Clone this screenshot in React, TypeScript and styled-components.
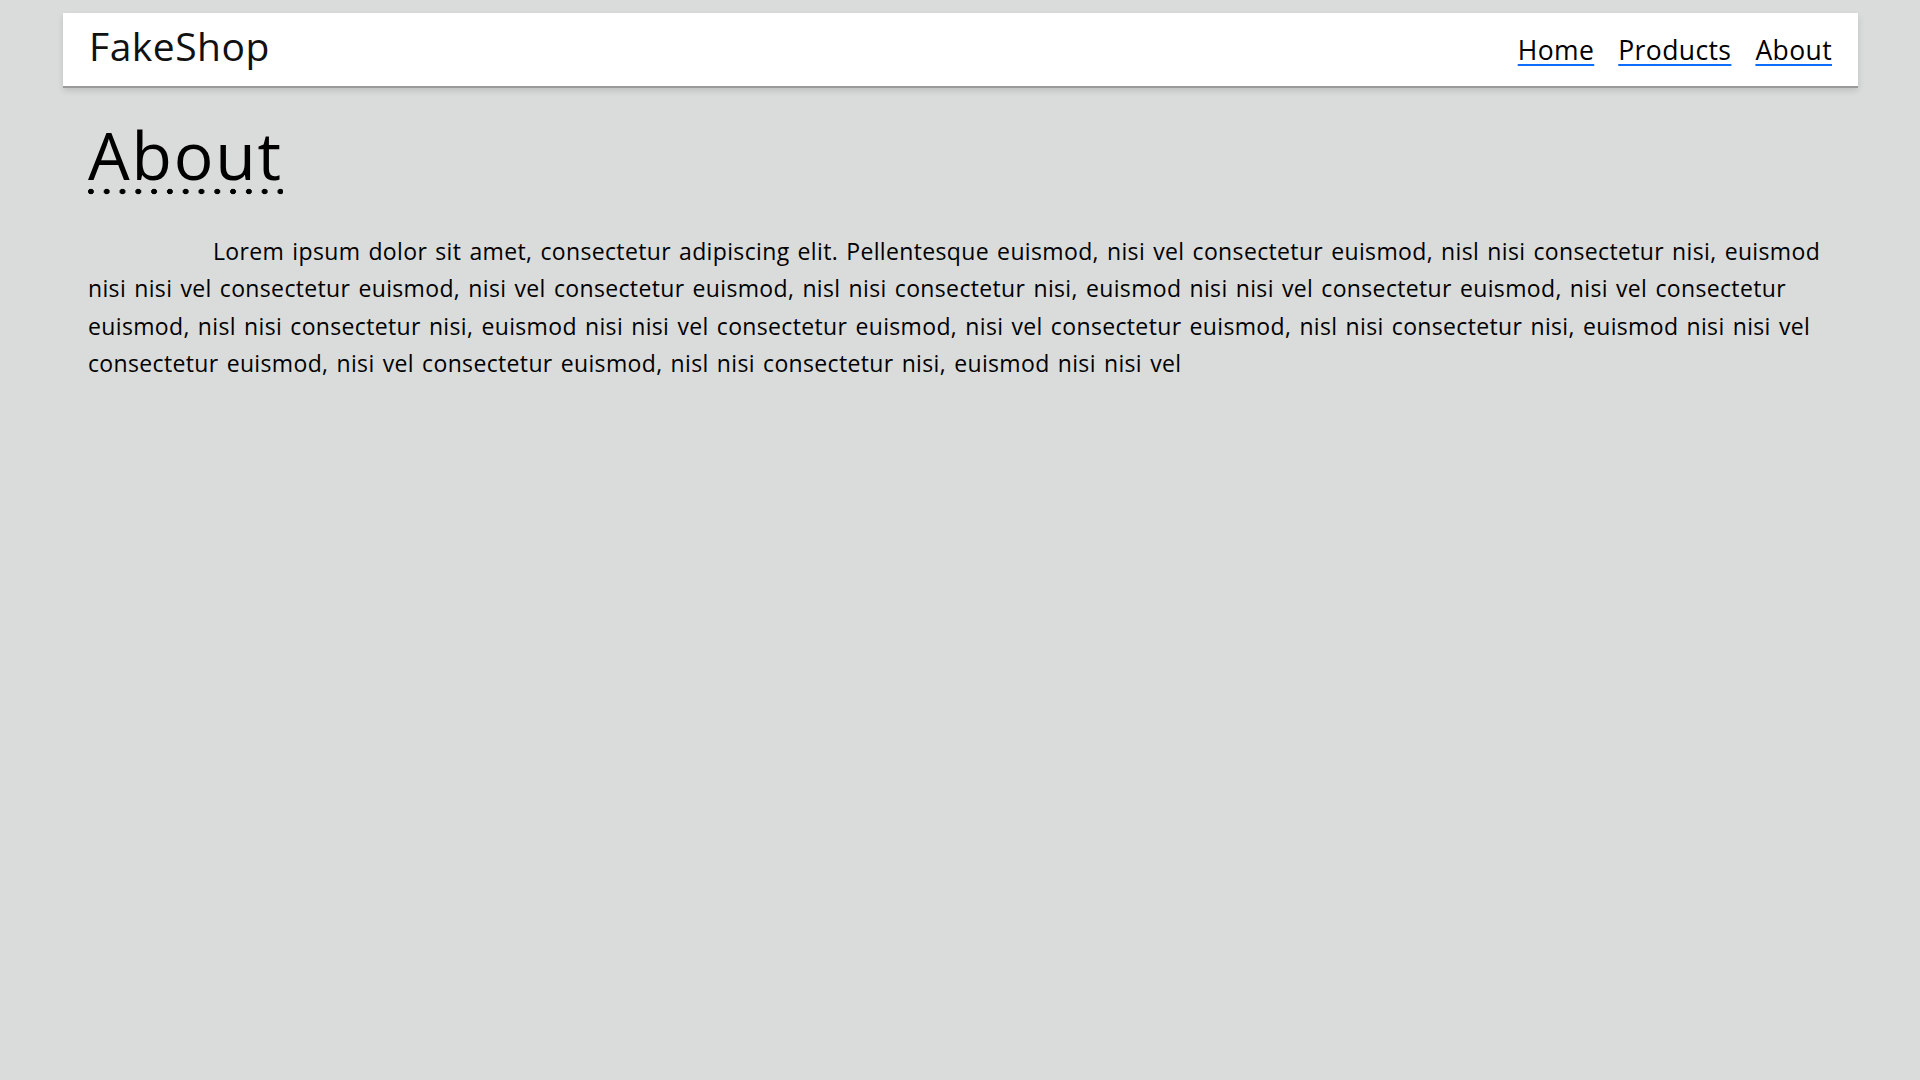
import React from "react";
import styled, { createGlobalStyle } from "styled-components";

const Global = createGlobalStyle`
  html, body { margin: 0; padding: 0; }
  body {
    background: #dadcdb;
    color: #000;
    font-family: "Open Sans", "Liberation Sans", sans-serif;
  }
`;

const Page = styled.div`
  padding: 13px 62px 0 63px;
`;

const Header = styled.header`
  display: flex;
  align-items: center;
  justify-content: space-between;
  height: 75px;
  box-sizing: border-box;
  padding: 0 26px 0 26px;
  background: #fff;
  border-bottom: 2px solid #9a9a9a;
  box-shadow: 0 3px 6px rgba(0, 0, 0, 0.12);
`;

const Brand = styled.div`
  font-family: "Open Sans", sans-serif;
  font-size: 39px;
  letter-spacing: 0.5px;
  color: #111;
  margin-top: -8px;
`;

const Nav = styled.nav`
  display: flex;
  gap: 24px;
`;

const NavLink = styled.a`
  font-family: "Open Sans", sans-serif;
  font-size: 26.5px;
  letter-spacing: 0.4px;
  color: #000;
  text-decoration: underline;
  text-decoration-color: #0d6efd;
  text-decoration-thickness: 2px;
  text-underline-offset: 4px;
`;

const Main = styled.main`
  padding: 0 25px;
`;

const Title = styled.h1`
  margin: 26px 0 0;
  font-family: "Open Sans", sans-serif;
  font-weight: 400;
  font-size: 66px;
  letter-spacing: 1.8px;
  line-height: 80px;
`;

const Dotted = styled.span`
  background-image: radial-gradient(circle, #000 2.6px, transparent 3.1px);
  background-size: 15.8px 7px;
  background-repeat: repeat-x;
  background-position: -5px calc(100% - 4px);
`;

const Para = styled.p`
  margin: 39px 0 0;
  font-family: "Open Sans", sans-serif;
  font-size: 23px;
  line-height: 37.4px;
  letter-spacing: 0.35px;
  word-spacing: 1.8px;
  text-indent: 125px;
`;

const text =
  "Lorem ipsum dolor sit amet, consectetur adipiscing elit. Pellentesque euismod, nisi vel consectetur euismod, nisl nisi consectetur nisi, euismod nisi nisi vel consectetur euismod, nisi vel consectetur euismod, nisl nisi consectetur nisi, euismod nisi nisi vel consectetur euismod, nisi vel consectetur euismod, nisl nisi consectetur nisi, euismod nisi nisi vel consectetur euismod, nisi vel consectetur euismod, nisl nisi consectetur nisi, euismod nisi nisi vel consectetur euismod, nisi vel consectetur euismod, nisl nisi consectetur nisi, euismod nisi nisi vel";

export default function App() {
  return (
    <>
      <Global />
      <Page>
        <Header>
          <Brand>FakeShop</Brand>
          <Nav>
            <NavLink href="#">Home</NavLink>
            <NavLink href="#">Products</NavLink>
            <NavLink href="#">About</NavLink>
          </Nav>
        </Header>
        <Main>
          <Title>
            <Dotted>About</Dotted>
          </Title>
          <Para>{text}</Para>
        </Main>
      </Page>
    </>
  );
}
